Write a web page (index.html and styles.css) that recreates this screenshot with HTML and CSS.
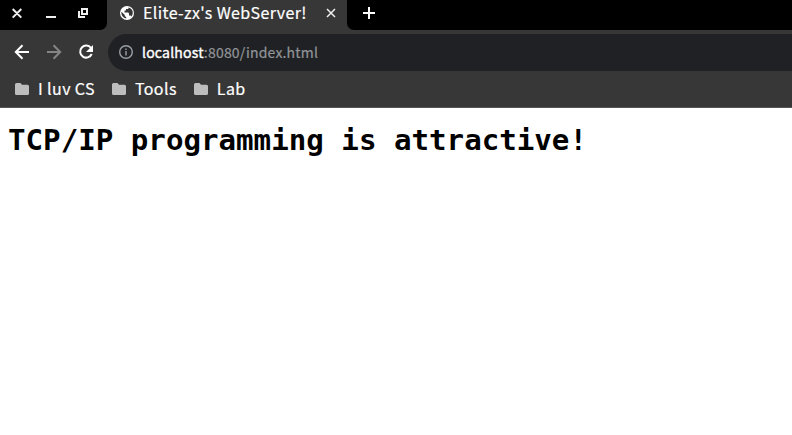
FILE: index.html
```html
<!DOCTYPE html>
<html lang="en">
<head>
<meta charset="utf-8">
<title>Elite-zx's WebServer!</title>
<link rel="stylesheet" href="styles.css">
</head>
<body>
<header class="browser">
  <div class="tabstrip">
    <div class="controls">
      <svg width="100" height="30" viewBox="0 0 100 30" fill="none" stroke="#eee" stroke-width="2"><path d="M12.700 9l8.600 8.600M21.300 9l-8.600 8.600M46 17h10M82 9h5v5h-5zM79 11v6h6"/></svg>
    </div>
    <div class="tab">
      <svg class="globe" width="14" height="14" viewBox="0 0 14 14"><circle cx="7" cy="7" r="7" fill="#fff"/><path d="M8.500 1.400L8.300 3H6v1.500H4.500V6.500H8.200l.8 1v2h1.500l1 .9A5.600 5.600 0 0 0 8.500 1.400M1.500 5.800A5.700 5.700 0 0 0 6.200 12.500V11l-1.400-.7V9z" fill="#373737"/></svg>
      <span class="tab-title">Elite-zx's WebServer!</span>
      <svg class="close" width="10" height="10" viewBox="0 0 10 10" fill="none" stroke="#eee" stroke-width="1.500"><path d="M1 1l8 8M9 1L1 9"/></svg>
    </div>
    <div class="newtab">
      <svg width="44" height="30" viewBox="0 0 44 30" fill="none" stroke="#fff" stroke-width="2"><path d="M16 13h12M22 7v12"/></svg>
    </div>
  </div>
  <div class="toolbar">
    <svg class="nav" width="108" height="41" viewBox="0 0 108 41" fill="none" stroke-width="2">
      <path stroke="#fff" d="M29 18H16M22.500 11.300L15.800 18l6.700 6.700"/>
      <path stroke="#858585" d="M47 18h13M53.500 11.300l6.700 6.700-6.700 6.700"/>
      <path stroke="#fff" d="M91 14a6 6 0 1 0 .7 6"/>
      <path fill="#fff" d="M93 11v7h-7z"/>
    </svg>
    <div class="address">
      <svg class="info" width="14" height="14" viewBox="0 0 14 14" fill="none" stroke="#9aa0a6" stroke-width="1.400"><circle cx="7" cy="7" r="6.300"/><path d="M7 6v4.500M7 3.500v1.500"/></svg>
      <span class="url"><span class="host">localhost</span>:8080/index.html</span>
    </div>
  </div>
  <nav class="bookmarks">
    <span class="bookmark"><svg width="14" height="12" viewBox="0 0 14 12"><path d="M1.500 0H5.500L7 1.700h5.500A1.500 1.500 0 0 1 14 3.200v7.300a1.500 1.500 0 0 1-1.500 1.500h-11A1.500 1.500 0 0 1 0 10.500v-9A1.500 1.500 0 0 1 1.500 0z"/></svg><span class="label">I luv CS</span></span>
    <span class="bookmark"><svg width="14" height="12" viewBox="0 0 14 12"><path d="M1.500 0H5.500L7 1.700h5.500A1.500 1.500 0 0 1 14 3.200v7.300a1.500 1.500 0 0 1-1.500 1.500h-11A1.500 1.500 0 0 1 0 10.500v-9A1.500 1.500 0 0 1 1.500 0z"/></svg><span class="label">Tools</span></span>
    <span class="bookmark"><svg width="14" height="12" viewBox="0 0 14 12"><path d="M1.500 0H5.500L7 1.700h5.500A1.500 1.500 0 0 1 14 3.200v7.300a1.500 1.500 0 0 1-1.500 1.500h-11A1.500 1.500 0 0 1 0 10.500v-9A1.500 1.500 0 0 1 1.500 0z"/></svg><span class="label">Lab</span></span>
  </nav>
</header>
<main class="page"><h1>TCP/IP programming is attractive!</h1></main>
</body>
</html>
```
FILE: styles.css
```css
* { box-sizing: border-box; }
body { margin: 0; background: #fff; overflow: hidden; font-family: "Noto Sans CJK SC", sans-serif; }
svg { display: block; flex: none; }
.browser { height: 108px; background: #373737; border-bottom: 1px solid #555; color: #fff; }
.tabstrip { display: flex; height: 30px; }
.controls { width: 107px; background: #000; border-bottom-right-radius: 7px; }
.tab { display: flex; align-items: center; width: 240px; height: 27px; padding-left: 13px; }
.globe { margin-top: -1px; }
.tab-title { width: 164px; height: 27px; margin: 0 20px 0 9px; font-size: 16px; line-height: 24px; letter-spacing: .38px; white-space: nowrap; -webkit-text-stroke: .2px #fff; }
.close { margin-left: -1px; margin-top: -1px; }
.newtab { flex: 1; background: #000; border-bottom-left-radius: 7px; }
.toolbar { display: flex; height: 45px; padding-top: 4px; }
.nav { width: 108px; }
.address { display: flex; align-items: center; flex: 1; height: 37px; padding-left: 11px; background: #202124; border-radius: 19px 0 0 19px; }
.info { margin-top: -1px; }
.url { height: 23px; margin-left: 9px; color: #919599; font-size: 14px; line-height: 22px; letter-spacing: .2px; white-space: nowrap; -webkit-text-stroke: .2px #919599; }
.host { color: #fff; -webkit-text-stroke: .4px #fff; }
.bookmarks { display: flex; height: 28px; padding: 0 15px; gap: 17px; }
.bookmark { display: flex; align-items: center; gap: 9px; font-size: 16px; line-height: 24px; letter-spacing: .4px; white-space: nowrap; -webkit-text-stroke: .2px #fff; }
.label { height: 27px; }
.bookmark svg { fill: #bdbdbd; }
.page { padding: 12px 8px; }
h1 { margin: 0; color: #000; font: bold 29.15px/40px "DejaVu Sans Mono", monospace; white-space: nowrap; }
```
